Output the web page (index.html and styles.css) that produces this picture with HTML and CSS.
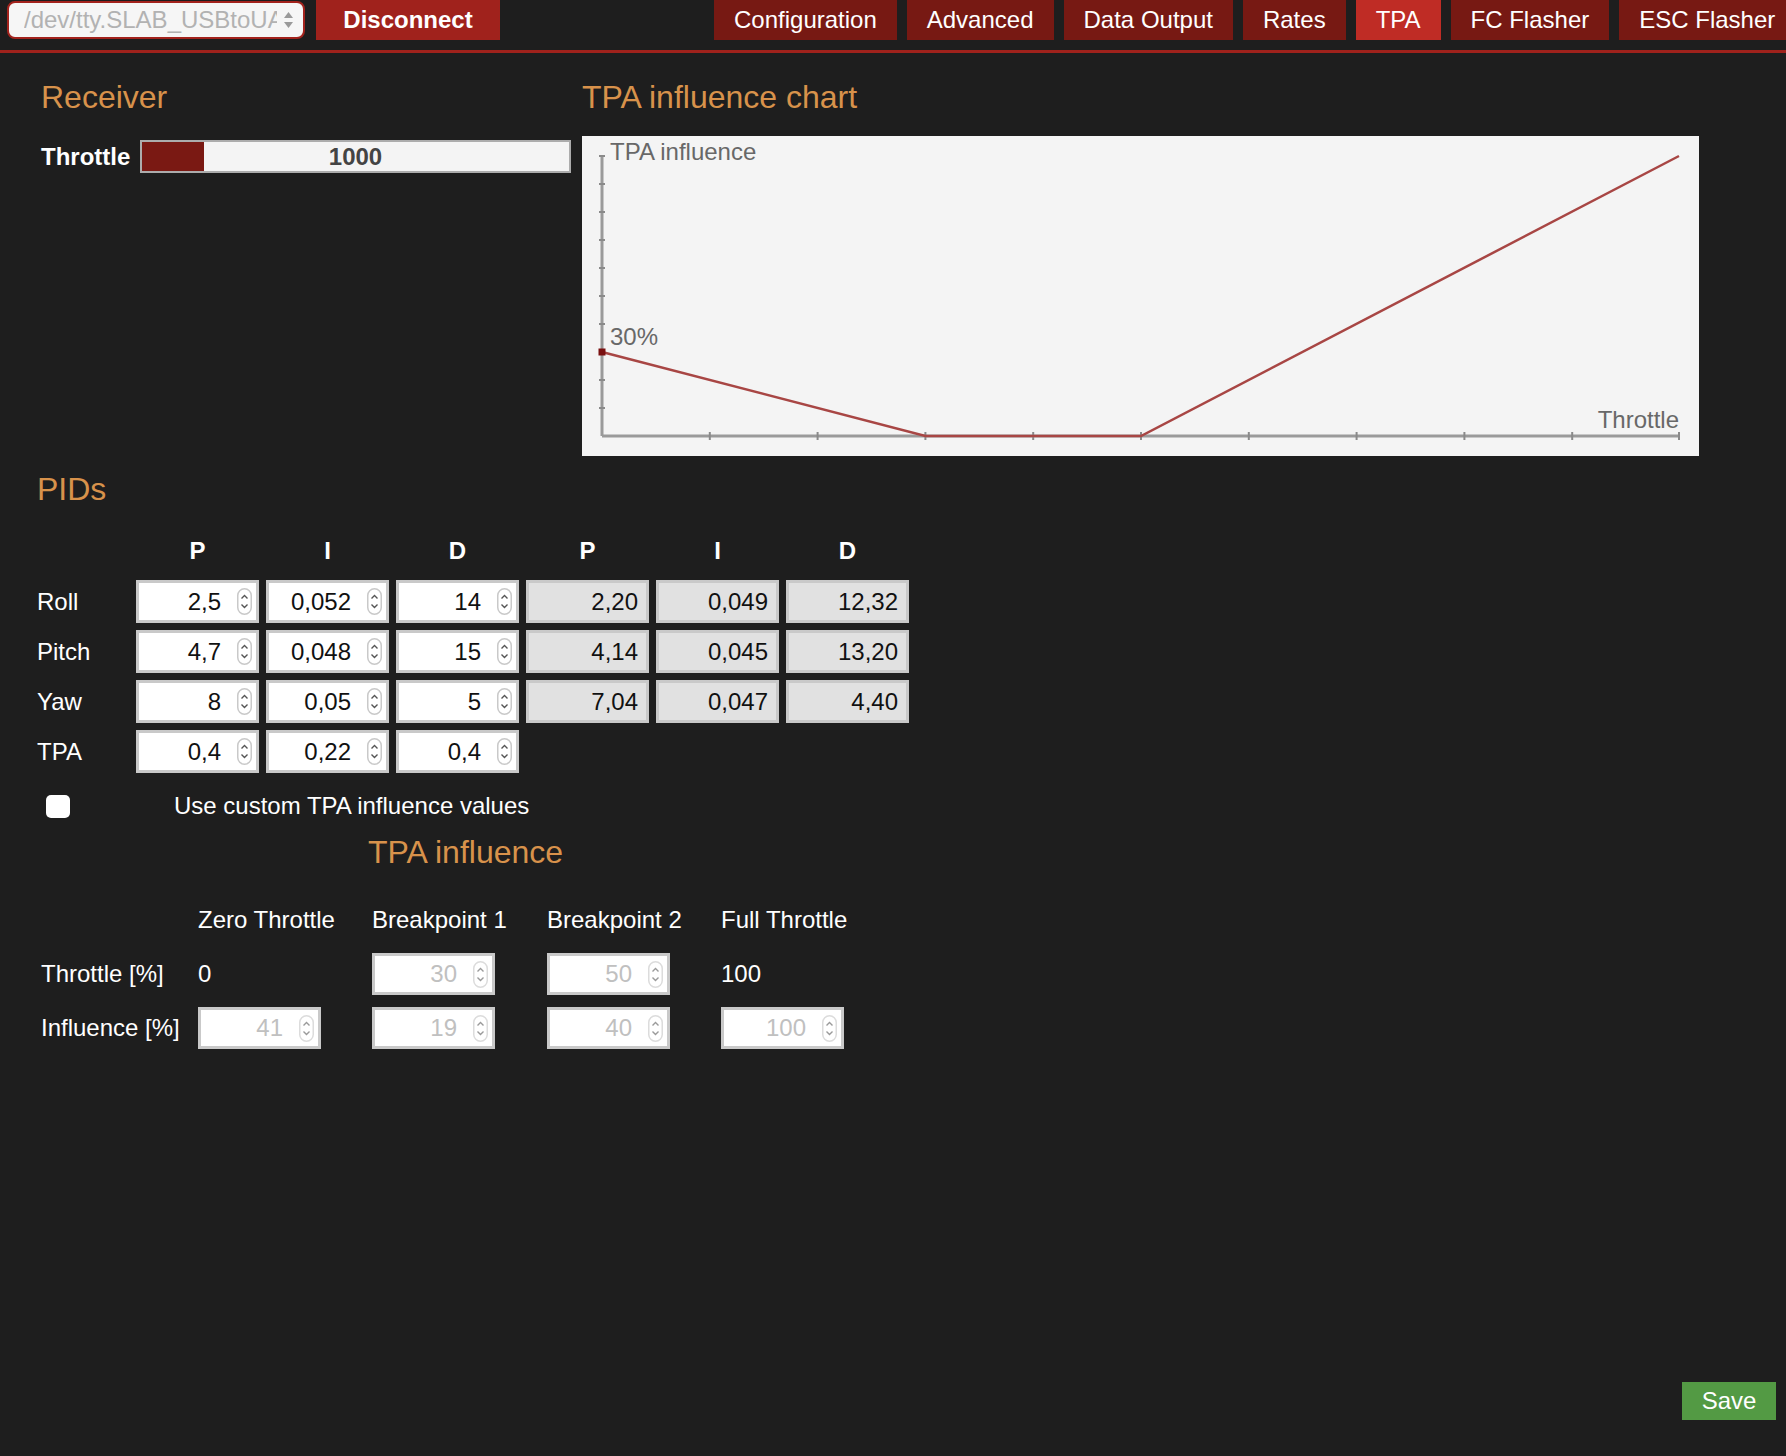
FILE: index.html
```html
<!DOCTYPE html>
<html>
<head>
<meta charset="utf-8">
<title>TPA</title>
<link rel="stylesheet" href="styles.css">
</head>
<body>
<div class="page">
  <header class="topbar">
    <div class="port-select">
      <span class="port-text">/dev/tty.SLAB_USBtoUART</span>
      <svg class="select-arrows" width="11" height="18" viewBox="0 0 11 18"><polygon points="5.5,1 10,7 1,7" fill="#9a9a9a"/><polygon points="1,11 10,11 5.5,17" fill="#9a9a9a"/></svg>
    </div>
    <div class="btn-disconnect">Disconnect</div>
    <nav class="tabs">
      <div class="tab">Configuration</div>
      <div class="tab">Advanced</div>
      <div class="tab">Data Output</div>
      <div class="tab">Rates</div>
      <div class="tab tab-active">TPA</div>
      <div class="tab">FC Flasher</div>
      <div class="tab">ESC Flasher</div>
    </nav>
  </header>
  <div class="topline"></div>

  <main class="content">
    <section class="top-section">
      <div class="receiver-col">
        <h2 class="heading">Receiver</h2>
        <div class="receiver-row">
          <div class="receiver-label">Throttle</div>
          <div class="bar">
            <div class="bar-fill"></div>
            <div class="bar-value">1000</div>
          </div>
        </div>
      </div>
      <div class="chart-col">
        <h2 class="heading">TPA influence chart</h2>
        <svg class="chart" width="1117" height="320" viewBox="0 0 1117 320">
          <g stroke="#9a9a9a" stroke-width="3" fill="none">
            <line x1="20" y1="19" x2="20" y2="300"/>
            <line x1="20" y1="300" x2="1098" y2="300"/>
          </g>
          <g stroke="#8a8a8a" stroke-width="2">
            <line x1="17" y1="20" x2="23" y2="20"/>
            <line x1="17" y1="48" x2="23" y2="48"/>
            <line x1="17" y1="76" x2="23" y2="76"/>
            <line x1="17" y1="104" x2="23" y2="104"/>
            <line x1="17" y1="132" x2="23" y2="132"/>
            <line x1="17" y1="160" x2="23" y2="160"/>
            <line x1="17" y1="188" x2="23" y2="188"/>
            <line x1="17" y1="244" x2="23" y2="244"/>
            <line x1="17" y1="272" x2="23" y2="272"/>
            <line x1="127.8" y1="296" x2="127.8" y2="304"/>
            <line x1="235.6" y1="296" x2="235.6" y2="304"/>
            <line x1="343.4" y1="296" x2="343.4" y2="304"/>
            <line x1="451.2" y1="296" x2="451.2" y2="304"/>
            <line x1="559" y1="296" x2="559" y2="304"/>
            <line x1="666.8" y1="296" x2="666.8" y2="304"/>
            <line x1="774.6" y1="296" x2="774.6" y2="304"/>
            <line x1="882.4" y1="296" x2="882.4" y2="304"/>
            <line x1="990.2" y1="296" x2="990.2" y2="304"/>
            <line x1="1097" y1="296" x2="1097" y2="304"/>
          </g>
          <polyline points="20,216 343.4,300 559,300 1097,20" fill="none" stroke="#a84644" stroke-width="2.5"/>
          <rect x="16.5" y="212.5" width="7" height="7" fill="#7a1010"/>
          <text x="28" y="24" class="chart-text">TPA influence</text>
          <text x="28" y="209" class="chart-text">30%</text>
          <text x="1097" y="292" class="chart-text" text-anchor="end">Throttle</text>
        </svg>
      </div>
    </section>

    <h2 class="heading pids-heading">PIDs</h2>
    <div class="pid-table">
      <div></div>
      <div class="col-head">P</div>
      <div class="col-head">I</div>
      <div class="col-head">D</div>
      <div class="col-head">P</div>
      <div class="col-head">I</div>
      <div class="col-head">D</div>

      <div class="row-label">Roll</div>
      <div class="field"><span>2,5</span><svg class="spin" width="15" height="27" viewBox="0 0 15 27"><rect x="0.75" y="0.75" width="13.5" height="25.5" rx="6.75" fill="#fff" stroke="#c9c9c9" stroke-width="1.5"/><polyline points="4.5,10.5 7.5,7.5 10.5,10.5" fill="none" stroke="#555" stroke-width="1.4"/><polyline points="4.5,16.5 7.5,19.5 10.5,16.5" fill="none" stroke="#555" stroke-width="1.4"/></svg></div>
      <div class="field"><span>0,052</span><svg class="spin" width="15" height="27" viewBox="0 0 15 27"><rect x="0.75" y="0.75" width="13.5" height="25.5" rx="6.75" fill="#fff" stroke="#c9c9c9" stroke-width="1.5"/><polyline points="4.5,10.5 7.5,7.5 10.5,10.5" fill="none" stroke="#555" stroke-width="1.4"/><polyline points="4.5,16.5 7.5,19.5 10.5,16.5" fill="none" stroke="#555" stroke-width="1.4"/></svg></div>
      <div class="field"><span>14</span><svg class="spin" width="15" height="27" viewBox="0 0 15 27"><rect x="0.75" y="0.75" width="13.5" height="25.5" rx="6.75" fill="#fff" stroke="#c9c9c9" stroke-width="1.5"/><polyline points="4.5,10.5 7.5,7.5 10.5,10.5" fill="none" stroke="#555" stroke-width="1.4"/><polyline points="4.5,16.5 7.5,19.5 10.5,16.5" fill="none" stroke="#555" stroke-width="1.4"/></svg></div>
      <div class="field field-ro"><span>2,20</span></div>
      <div class="field field-ro"><span>0,049</span></div>
      <div class="field field-ro"><span>12,32</span></div>

      <div class="row-label">Pitch</div>
      <div class="field"><span>4,7</span><svg class="spin" width="15" height="27" viewBox="0 0 15 27"><rect x="0.75" y="0.75" width="13.5" height="25.5" rx="6.75" fill="#fff" stroke="#c9c9c9" stroke-width="1.5"/><polyline points="4.5,10.5 7.5,7.5 10.5,10.5" fill="none" stroke="#555" stroke-width="1.4"/><polyline points="4.5,16.5 7.5,19.5 10.5,16.5" fill="none" stroke="#555" stroke-width="1.4"/></svg></div>
      <div class="field"><span>0,048</span><svg class="spin" width="15" height="27" viewBox="0 0 15 27"><rect x="0.75" y="0.75" width="13.5" height="25.5" rx="6.75" fill="#fff" stroke="#c9c9c9" stroke-width="1.5"/><polyline points="4.5,10.5 7.5,7.5 10.5,10.5" fill="none" stroke="#555" stroke-width="1.4"/><polyline points="4.5,16.5 7.5,19.5 10.5,16.5" fill="none" stroke="#555" stroke-width="1.4"/></svg></div>
      <div class="field"><span>15</span><svg class="spin" width="15" height="27" viewBox="0 0 15 27"><rect x="0.75" y="0.75" width="13.5" height="25.5" rx="6.75" fill="#fff" stroke="#c9c9c9" stroke-width="1.5"/><polyline points="4.5,10.5 7.5,7.5 10.5,10.5" fill="none" stroke="#555" stroke-width="1.4"/><polyline points="4.5,16.5 7.5,19.5 10.5,16.5" fill="none" stroke="#555" stroke-width="1.4"/></svg></div>
      <div class="field field-ro"><span>4,14</span></div>
      <div class="field field-ro"><span>0,045</span></div>
      <div class="field field-ro"><span>13,20</span></div>

      <div class="row-label">Yaw</div>
      <div class="field"><span>8</span><svg class="spin" width="15" height="27" viewBox="0 0 15 27"><rect x="0.75" y="0.75" width="13.5" height="25.5" rx="6.75" fill="#fff" stroke="#c9c9c9" stroke-width="1.5"/><polyline points="4.5,10.5 7.5,7.5 10.5,10.5" fill="none" stroke="#555" stroke-width="1.4"/><polyline points="4.5,16.5 7.5,19.5 10.5,16.5" fill="none" stroke="#555" stroke-width="1.4"/></svg></div>
      <div class="field"><span>0,05</span><svg class="spin" width="15" height="27" viewBox="0 0 15 27"><rect x="0.75" y="0.75" width="13.5" height="25.5" rx="6.75" fill="#fff" stroke="#c9c9c9" stroke-width="1.5"/><polyline points="4.5,10.5 7.5,7.5 10.5,10.5" fill="none" stroke="#555" stroke-width="1.4"/><polyline points="4.5,16.5 7.5,19.5 10.5,16.5" fill="none" stroke="#555" stroke-width="1.4"/></svg></div>
      <div class="field"><span>5</span><svg class="spin" width="15" height="27" viewBox="0 0 15 27"><rect x="0.75" y="0.75" width="13.5" height="25.5" rx="6.75" fill="#fff" stroke="#c9c9c9" stroke-width="1.5"/><polyline points="4.5,10.5 7.5,7.5 10.5,10.5" fill="none" stroke="#555" stroke-width="1.4"/><polyline points="4.5,16.5 7.5,19.5 10.5,16.5" fill="none" stroke="#555" stroke-width="1.4"/></svg></div>
      <div class="field field-ro"><span>7,04</span></div>
      <div class="field field-ro"><span>0,047</span></div>
      <div class="field field-ro"><span>4,40</span></div>

      <div class="row-label">TPA</div>
      <div class="field"><span>0,4</span><svg class="spin" width="15" height="27" viewBox="0 0 15 27"><rect x="0.75" y="0.75" width="13.5" height="25.5" rx="6.75" fill="#fff" stroke="#c9c9c9" stroke-width="1.5"/><polyline points="4.5,10.5 7.5,7.5 10.5,10.5" fill="none" stroke="#555" stroke-width="1.4"/><polyline points="4.5,16.5 7.5,19.5 10.5,16.5" fill="none" stroke="#555" stroke-width="1.4"/></svg></div>
      <div class="field"><span>0,22</span><svg class="spin" width="15" height="27" viewBox="0 0 15 27"><rect x="0.75" y="0.75" width="13.5" height="25.5" rx="6.75" fill="#fff" stroke="#c9c9c9" stroke-width="1.5"/><polyline points="4.5,10.5 7.5,7.5 10.5,10.5" fill="none" stroke="#555" stroke-width="1.4"/><polyline points="4.5,16.5 7.5,19.5 10.5,16.5" fill="none" stroke="#555" stroke-width="1.4"/></svg></div>
      <div class="field"><span>0,4</span><svg class="spin" width="15" height="27" viewBox="0 0 15 27"><rect x="0.75" y="0.75" width="13.5" height="25.5" rx="6.75" fill="#fff" stroke="#c9c9c9" stroke-width="1.5"/><polyline points="4.5,10.5 7.5,7.5 10.5,10.5" fill="none" stroke="#555" stroke-width="1.4"/><polyline points="4.5,16.5 7.5,19.5 10.5,16.5" fill="none" stroke="#555" stroke-width="1.4"/></svg></div>
    </div>

    <div class="custom-row">
      <div class="checkbox"></div>
      <div class="custom-label">Use custom TPA influence values</div>
    </div>

    <h2 class="heading influence-heading">TPA influence</h2>
    <div class="influence-table">
      <div></div>
      <div class="inf-head">Zero Throttle</div>
      <div class="inf-head">Breakpoint 1</div>
      <div class="inf-head">Breakpoint 2</div>
      <div class="inf-head">Full Throttle</div>

      <div class="row-label">Throttle [%]</div>
      <div class="plain-value">0</div>
      <div class="field field-dis"><span>30</span><svg class="spin" width="15" height="27" viewBox="0 0 15 27"><rect x="0.75" y="0.75" width="13.5" height="25.5" rx="6.75" fill="#fff" stroke="#dcdcdc" stroke-width="1.5"/><polyline points="4.5,10.5 7.5,7.5 10.5,10.5" fill="none" stroke="#9a9a9a" stroke-width="1.4"/><polyline points="4.5,16.5 7.5,19.5 10.5,16.5" fill="none" stroke="#9a9a9a" stroke-width="1.4"/></svg></div>
      <div class="field field-dis"><span>50</span><svg class="spin" width="15" height="27" viewBox="0 0 15 27"><rect x="0.75" y="0.75" width="13.5" height="25.5" rx="6.75" fill="#fff" stroke="#dcdcdc" stroke-width="1.5"/><polyline points="4.5,10.5 7.5,7.5 10.5,10.5" fill="none" stroke="#9a9a9a" stroke-width="1.4"/><polyline points="4.5,16.5 7.5,19.5 10.5,16.5" fill="none" stroke="#9a9a9a" stroke-width="1.4"/></svg></div>
      <div class="plain-value">100</div>

      <div class="row-label">Influence [%]</div>
      <div class="field field-dis"><span>41</span><svg class="spin" width="15" height="27" viewBox="0 0 15 27"><rect x="0.75" y="0.75" width="13.5" height="25.5" rx="6.75" fill="#fff" stroke="#dcdcdc" stroke-width="1.5"/><polyline points="4.5,10.5 7.5,7.5 10.5,10.5" fill="none" stroke="#9a9a9a" stroke-width="1.4"/><polyline points="4.5,16.5 7.5,19.5 10.5,16.5" fill="none" stroke="#9a9a9a" stroke-width="1.4"/></svg></div>
      <div class="field field-dis"><span>19</span><svg class="spin" width="15" height="27" viewBox="0 0 15 27"><rect x="0.75" y="0.75" width="13.5" height="25.5" rx="6.75" fill="#fff" stroke="#dcdcdc" stroke-width="1.5"/><polyline points="4.5,10.5 7.5,7.5 10.5,10.5" fill="none" stroke="#9a9a9a" stroke-width="1.4"/><polyline points="4.5,16.5 7.5,19.5 10.5,16.5" fill="none" stroke="#9a9a9a" stroke-width="1.4"/></svg></div>
      <div class="field field-dis"><span>40</span><svg class="spin" width="15" height="27" viewBox="0 0 15 27"><rect x="0.75" y="0.75" width="13.5" height="25.5" rx="6.75" fill="#fff" stroke="#dcdcdc" stroke-width="1.5"/><polyline points="4.5,10.5 7.5,7.5 10.5,10.5" fill="none" stroke="#9a9a9a" stroke-width="1.4"/><polyline points="4.5,16.5 7.5,19.5 10.5,16.5" fill="none" stroke="#9a9a9a" stroke-width="1.4"/></svg></div>
      <div class="field field-dis"><span>100</span><svg class="spin" width="15" height="27" viewBox="0 0 15 27"><rect x="0.75" y="0.75" width="13.5" height="25.5" rx="6.75" fill="#fff" stroke="#dcdcdc" stroke-width="1.5"/><polyline points="4.5,10.5 7.5,7.5 10.5,10.5" fill="none" stroke="#9a9a9a" stroke-width="1.4"/><polyline points="4.5,16.5 7.5,19.5 10.5,16.5" fill="none" stroke="#9a9a9a" stroke-width="1.4"/></svg></div>
    </div>
  </main>

  <footer class="footer">
    <div class="btn-save">Save</div>
  </footer>
</div>
</body>
</html>
```
FILE: styles.css
```css
html, body {
  margin: 0;
  padding: 0;
  background: #1e1e1e;
}

body {
  font-family: "Liberation Sans", Arial, Helvetica, sans-serif;
  font-size: 24px;
  color: #ffffff;
  overflow: hidden;
}

.page {
  height: 100vh;
  display: flex;
  flex-direction: column;
}

/* Header */
.topbar {
  display: flex;
  height: 40px;
  flex-shrink: 0;
  white-space: nowrap;
}

.port-select {
  box-sizing: border-box;
  width: 298px;
  height: 38px;
  margin: 1px 0 0 7px;
  border: 2px solid #a3231d;
  border-radius: 8px;
  background: #f6f6f6;
  display: flex;
  align-items: center;
  padding: 0 9px 0 15px;
  flex-shrink: 0;
}

.port-text {
  width: 253px;
  overflow: hidden;
  white-space: nowrap;
  color: #b2b2b2;
  font-size: 24px;
  line-height: 30px;
}

.select-arrows {
  margin-left: auto;
  display: block;
}

.btn-disconnect {
  flex-shrink: 0;
  width: 184px;
  margin-left: 11px;
  background: #a0221c;
  color: #ffffff;
  font-weight: bold;
  text-align: center;
  line-height: 40px;
}

.tabs {
  display: flex;
  gap: 10px;
  margin-left: 214px;
  flex-shrink: 0;
}

.tab {
  background: #771913;
  color: #ffffff;
  padding: 0 20px;
  line-height: 40px;
  flex-shrink: 0;
}

.tab-active {
  background: #bf2c25;
}

.topline {
  height: 3px;
  margin-top: 10px;
  background: #a0221c;
  flex-shrink: 0;
}

/* Content */
.content {
  padding-left: 37px;
}

.heading {
  margin: 0;
  font-size: 32px;
  font-weight: normal;
  line-height: 36px;
  color: #d8924b;
}

.top-section {
  display: flex;
  gap: 11px;
  margin-top: 26px;
}

.receiver-col {
  width: 530px;
  margin-left: 4px;
}

.receiver-row {
  display: flex;
  align-items: center;
  margin-top: 25px;
}

.receiver-label {
  width: 99px;
  font-weight: bold;
  line-height: 28px;
}

.bar {
  box-sizing: border-box;
  width: 431px;
  height: 33px;
  border: 2px solid #acacac;
  background: #f4f4f4;
  display: grid;
}

.bar-fill {
  grid-area: 1 / 1;
  width: 62px;
  background: #7a1913;
}

.bar-value {
  grid-area: 1 / 1;
  justify-self: center;
  align-self: center;
  font-weight: bold;
  color: #444444;
  line-height: 28px;
}

.chart-col .chart {
  display: block;
  margin-top: 21px;
  background: #f4f4f4;
}

.chart-text {
  font-family: "Liberation Sans", Arial, Helvetica, sans-serif;
  font-size: 24px;
  fill: #686868;
}

/* PIDs */
.pids-heading {
  margin-top: 15px;
}

.pid-table {
  display: grid;
  grid-template-columns: 92px repeat(6, 123px);
  grid-template-rows: 36px repeat(4, 43px);
  column-gap: 7px;
  row-gap: 7px;
  margin-top: 30px;
}

.col-head {
  text-align: center;
  font-weight: bold;
  line-height: 28px;
  align-self: start;
}

.row-label {
  align-self: center;
  line-height: 28px;
  white-space: nowrap;
}

.field {
  box-sizing: border-box;
  border: 3px solid #c9c9c9;
  background: #ffffff;
  display: flex;
  align-items: center;
  justify-content: flex-end;
  gap: 16px;
  padding-right: 4px;
  color: #111111;
  line-height: 28px;
}

.spin {
  display: block;
  flex-shrink: 0;
}

.field-ro {
  background: #e1e1e1;
  padding-right: 8px;
}

.field-dis {
  color: #c0c0c0;
  width: 123px;
  height: 42px;
}

/* Custom row */
.custom-row {
  display: flex;
  align-items: center;
  height: 26px;
  margin-top: 20px;
}

.checkbox {
  width: 24px;
  height: 23px;
  margin-left: 9px;
  background: #ffffff;
  border-radius: 5px;
}

.custom-label {
  margin-left: 104px;
  line-height: 28px;
}

.influence-heading {
  margin-top: 15px;
  margin-left: 331px;
}

.influence-table {
  display: grid;
  grid-template-columns: 157px 174px 175px 174px 123px;
  grid-template-rows: 35px 42px 42px;
  row-gap: 12px;
  margin-top: 36px;
  padding-left: 4px;
}

.inf-head {
  line-height: 28px;
  align-self: start;
  white-space: nowrap;
}

.plain-value {
  align-self: center;
  line-height: 28px;
}

/* Footer */
.footer {
  margin-top: auto;
  display: flex;
  justify-content: flex-end;
  padding: 0 10px 36px 0;
}

.btn-save {
  box-sizing: border-box;
  width: 94px;
  height: 38px;
  line-height: 38px;
  text-align: center;
  background: #539a44;
  color: #ffffff;
}
```
